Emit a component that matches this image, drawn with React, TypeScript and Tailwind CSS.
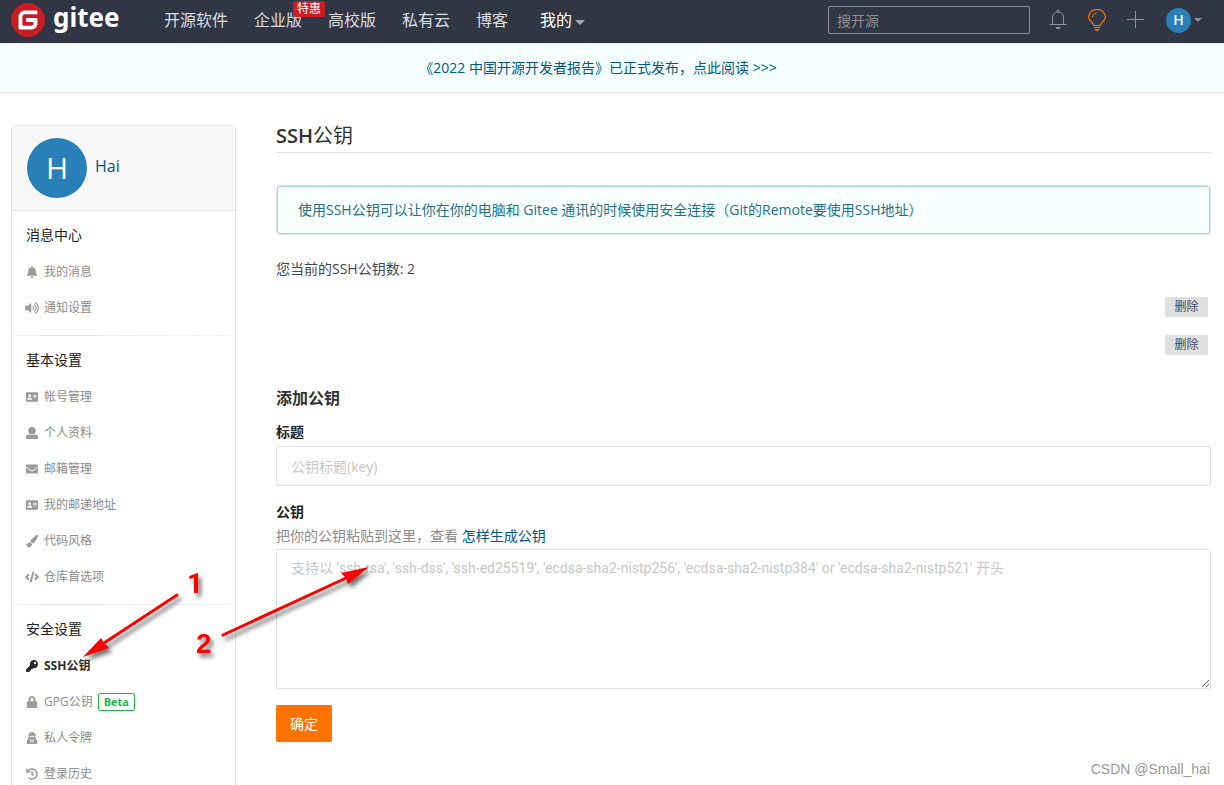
import type { ComponentType, ReactNode } from 'react';
import {
  FaBell,
  FaVolumeUp,
  FaAddressCard,
  FaEnvelope,
  FaPaintBrush,
  FaCode,
  FaKey,
  FaLock,
  FaUserSecret,
  FaHistory,
} from 'react-icons/fa';
import { SiGitee } from 'react-icons/si';

type IconType = ComponentType<{ className?: string }>;

type MenuItem = {
  label: string;
  icon: IconType;
  wide?: boolean;
  active?: boolean;
  badge?: string;
};

function PersonIcon({ className }: { className?: string }) {
  return (
    <svg viewBox="0 0 12 12" fill="currentColor" className={className} aria-hidden="true">
      <circle cx="6" cy="3.8" r="3.7" />
      <path d="M0 11.4V10c0-1.2.8-1.9 2-2.2l1.6-.4c1.4 1 3.4 1 4.8 0l1.6.4c1.2.3 2 1 2 2.2v1.4c0 .3-.2.6-.6.6H.6c-.4 0-.6-.3-.6-.6z" />
    </svg>
  );
}

const menu: { title: string; items: MenuItem[] }[] = [
  {
    title: '消息中心',
    items: [
      { label: '我的消息', icon: FaBell },
      { label: '通知设置', icon: FaVolumeUp, wide: true },
    ],
  },
  {
    title: '基本设置',
    items: [
      { label: '帐号管理', icon: FaAddressCard },
      { label: '个人资料', icon: PersonIcon },
      { label: '邮箱管理', icon: FaEnvelope },
      { label: '我的邮递地址', icon: FaAddressCard },
      { label: '代码风格', icon: FaPaintBrush },
      { label: '仓库首选项', icon: FaCode, wide: true },
    ],
  },
  {
    title: '安全设置',
    items: [
      { label: 'SSH公钥', icon: FaKey, active: true },
      { label: 'GPG公钥', icon: FaLock, badge: 'Beta' },
      { label: '私人令牌', icon: FaUserSecret },
      { label: '登录历史', icon: FaHistory },
    ],
  },
];

function Caret({ className }: { className?: string }) {
  return (
    <svg viewBox="0 0 10 5" fill="currentColor" className={className} aria-hidden="true">
      <path d="M0 0h10L5 5z" />
    </svg>
  );
}

function NavLink({ children }: { children: ReactNode }) {
  return (
    <a href="#" className="relative text-base leading-6 text-[#dcdde0] hover:text-white">
      {children}
    </a>
  );
}

function Header() {
  return (
    <header className="flex h-[43px] items-start bg-[#303643] pr-[22px] pl-[11px]">
      <a href="#" className="flex h-10 w-[126px] items-center gap-2" aria-label="gitee">
        <span className="flex size-[34px] shrink-0 items-center justify-center rounded-full bg-[radial-gradient(white_60%,transparent_62%)]">
          <SiGitee className="size-[34px] text-[#c71d23]" />
        </span>
        <span className="pb-1.5 font-['Noto_Sans',sans-serif] text-[26px] leading-8 font-bold text-white">gitee</span>
      </a>

      <nav className="ml-[27px] flex h-10 items-center gap-[26px]">
        <NavLink>开源软件</NavLink>
        <NavLink>
          企业版
          <span className="absolute -top-[7px] left-[39px] h-4 w-8 rounded-xs bg-[#c71d23] text-center text-xs leading-4 text-white">
            特惠
          </span>
        </NavLink>
        <NavLink>高校版</NavLink>
        <NavLink>私有云</NavLink>
        <NavLink>博客</NavLink>
        <button type="button" className="ml-1.5 flex items-center gap-[3px] text-base leading-6 text-white">
          我的
          <Caret className="mt-1 h-[5px] w-[10px] text-[#a3a8b2]" />
        </button>
      </nav>

      <div className="ml-auto flex h-10 items-center">
        <input
          type="text"
          aria-label="搜开源"
          placeholder="搜开源"
          className="h-7 w-[202px] rounded-xs border border-[#8c92a4] bg-transparent px-2 text-sm text-white placeholder:text-[#8d9094]"
        />
        <button type="button" aria-label="通知" className="ml-[19px] text-[#8c92a4]">
          <svg viewBox="0 0 18 22" className="h-[22px] w-[18px]" fill="none" stroke="currentColor">
            <path d="M3.5 15.5V8.5a5.5 5.5 0 0 1 11 0v7" />
            <path d="M.5 15.5h17" />
            <path d="M7.5 2.6a1.5 1.5 0 0 1 3 0" />
            <path d="M6.5 18h5a2.5 2.2 0 0 1-5 0z" fill="currentColor" stroke="none" />
          </svg>
        </button>
        <button type="button" aria-label="提示" className="ml-[21px] text-[#fe7300]">
          <svg viewBox="0 0 18 22" className="h-[22px] w-[18px]" fill="none" stroke="currentColor">
            <path d="M5.8 16.5c0-3-5.2-4.4-5.2-8.4a8.3 7.6 0 0 1 16.8 0c0 4-5.2 5.4-5.2 8.4z" strokeWidth="1.2" />
            <path d="M4.2 8.5A4.5 4.5 0 0 1 8.5 4.2" />
            <path d="M5.8 18.5h6.4M6.5 20.3h5M7.5 21.5h3" />
          </svg>
        </button>
        <button type="button" aria-label="新建" className="ml-[21px] text-[#8c92a4]">
          <svg viewBox="0 0 18 18" className="size-[18px]" fill="none" stroke="currentColor">
            <path d="M8.5 0v17M0 8.5h17" />
          </svg>
        </button>
        <button type="button" aria-label="Hai" className="ml-[21px] flex items-center gap-[3px]">
          <span className="flex size-[25px] items-center justify-center rounded-full bg-[#2980b9] text-sm leading-none font-semibold text-white">
            H
          </span>
          <Caret className="h-1 w-2 text-[#8c92a4]" />
        </button>
      </div>
    </header>
  );
}

function Sidebar() {
  return (
    <aside className="w-[225px] shrink-0 rounded-t-sm border border-b-0 border-[#e3e5e6] bg-white">
      <a href="#" className="flex h-[85px] items-center gap-2 border-b border-[#e3e5e6] bg-[#f7f7f7] pl-[15px] text-[#005980]">
        <span className="flex size-[60px] items-center justify-center rounded-full bg-[#2980b9] text-[30px] leading-none text-white">
          H
        </span>
        <span className="pb-1 text-base">Hai</span>
      </a>
      {menu.map((group, i) => (
        <section key={group.title}>
          {i > 0 && <div className="mx-0.5 h-px bg-linear-to-r from-[#f5f5f6] via-[#e3e5e6] via-15% to-[#f5f5f6]" />}
          <div className="pt-1 pb-[9px]">
            <h2 className="px-[14px] text-sm leading-[39px] text-[#222]">{group.title}</h2>
            <ul>
              {group.items.map(({ label, icon: Icon, wide, active, badge }) => (
                <li key={label}>
                  <a
                    href="#"
                    className={
                      active
                        ? 'flex h-9 items-center pl-[13px] text-xs font-bold text-[#2b2b2b]'
                        : 'flex h-9 items-center pl-[13px] text-xs text-[#8c8c8c]'
                    }
                  >
                    <span className={active ? 'mr-[5px] flex w-[14px] justify-center' : 'mr-[5px] flex w-[14px] justify-center text-[#9b9b9b]'}>
                      <Icon className={wide ? 'size-[14px]' : 'size-3'} />
                    </span>
                    {label}
                    {badge && (
                      <span className="ml-[5px] rounded-xs border border-[#21ba45] px-[5px] text-[11px] leading-4 font-bold text-[#21ba45]">
                        {badge}
                      </span>
                    )}
                  </a>
                </li>
              ))}
            </ul>
          </div>
        </section>
      ))}
    </aside>
  );
}

function KeyForm() {
  return (
    <form className="mt-[31px] flex flex-col items-start" onSubmit={(e) => e.preventDefault()}>
      <h2 className="text-base leading-6 font-bold text-[#303133]">添加公钥</h2>
      <label htmlFor="key-title" className="mt-3 text-sm leading-5 font-bold text-[#222]">
        标题
      </label>
      <input
        id="key-title"
        type="text"
        placeholder="公钥标题(key)"
        className="mt-1 h-10 w-full rounded-xs border border-[#dce0e8] px-[14px] text-sm placeholder:text-[#c7c7c7]"
      />
      <label htmlFor="key-body" className="mt-4 text-sm leading-5 font-bold text-[#222]">
        公钥
      </label>
      <p className="mt-1 text-sm leading-5 text-[#8c8c8c]">
        把你的公钥粘贴到这里，查看{' '}
        <a href="#" className="text-[#005980]">
          怎样生成公钥
        </a>
      </p>
      <textarea
        id="key-body"
        placeholder="支持以 'ssh-rsa', 'ssh-dss', 'ssh-ed25519', 'ecdsa-sha2-nistp256', 'ecdsa-sha2-nistp384' or 'ecdsa-sha2-nistp521' 开头"
        className="mt-[3px] h-[140px] w-full resize-y rounded-xs border border-[#dce0e8] px-[14px] py-2 font-['Roboto','Noto_Sans_CJK_SC',sans-serif] text-sm leading-5 placeholder:text-[#c7c7c7]"
      />
      <button type="submit" className="mt-4 h-[37px] rounded-xs bg-[#fe7300] px-[14px] text-sm text-white">
        确定
      </button>
    </form>
  );
}

// Hand-drawn markers pointing at the menu entry and the key field
function Annotations() {
  return (
    <svg
      className="pointer-events-none absolute top-0 left-0 h-[785px] w-[400px] drop-shadow-[3px_4px_2px_rgba(0,0,0,0.55)]"
      viewBox="0 0 400 785"
      fill="#fe0000"
      aria-hidden="true"
    >
      <path d="M177 595L104 643M223 635L346 578" stroke="#fe0000" strokeWidth="3" strokeLinecap="round" />
      <path d="M83 657L101 638L104 643L109 648z" />
      <path d="M369 567L341 573L346 578L348 584z" />
      <text x="187" y="593" className="font-['Roboto',sans-serif] text-[28px] font-bold">1</text>
      <text x="196" y="653" className="font-['Liberation_Sans',sans-serif] text-[28px] font-bold">2</text>
    </svg>
  );
}

export default function App() {
  return (
    <div className="relative h-screen overflow-hidden bg-white font-['Open_Sans','Noto_Sans_CJK_SC',sans-serif] text-[#40485b]">
      <Header />
      <div className="flex h-[50px] items-center justify-center border-y border-[#e3e9ed] bg-[#f6ffff] pr-7">
        <a href="#" className="text-sm leading-5 text-[#005980]">
          《2022 中国开源开发者报告》已正式发布，点此阅读 &gt;&gt;&gt;
        </a>
      </div>

      <div className="flex items-start gap-10 pt-8 pr-[13px] pl-[11px]">
        <Sidebar />
        <main className="min-w-0 flex-1">
          <h1 className="h-7 border-b border-[#e0e0e0] text-xl leading-[22px] font-normal text-[#303133]">
            <span className="font-semibold">SSH</span>公钥
          </h1>
          <div className="mt-8 flex h-[50px] items-center rounded-sm border border-[#d9e6ea] bg-[#f8ffff] px-[21px] text-sm text-[#276f86] inset-ring inset-ring-[#a3d4de]">
            使用SSH公钥可以让你在你的电脑和 Gitee 通讯的时候使用安全连接（Git的Remote要使用SSH地址）
          </div>
          <p className="mt-6 text-sm leading-5">您当前的SSH公钥数: 2</p>
          <ul className="mt-[18px] flex flex-col items-end gap-[18px] pr-[3px]">
            {[1, 2].map((id) => (
              <li key={id} className="flex">
                <button type="button" className="h-5 w-[43px] rounded-xs bg-[#e0e0e0] text-xs leading-5">
                  删除
                </button>
              </li>
            ))}
          </ul>
          <KeyForm />
        </main>
      </div>

      <Annotations />
      <span className="absolute right-[14px] bottom-[6px] font-['Liberation_Sans',sans-serif] text-sm leading-5 text-[#999]">
        CSDN @Small_hai
      </span>
    </div>
  );
}
